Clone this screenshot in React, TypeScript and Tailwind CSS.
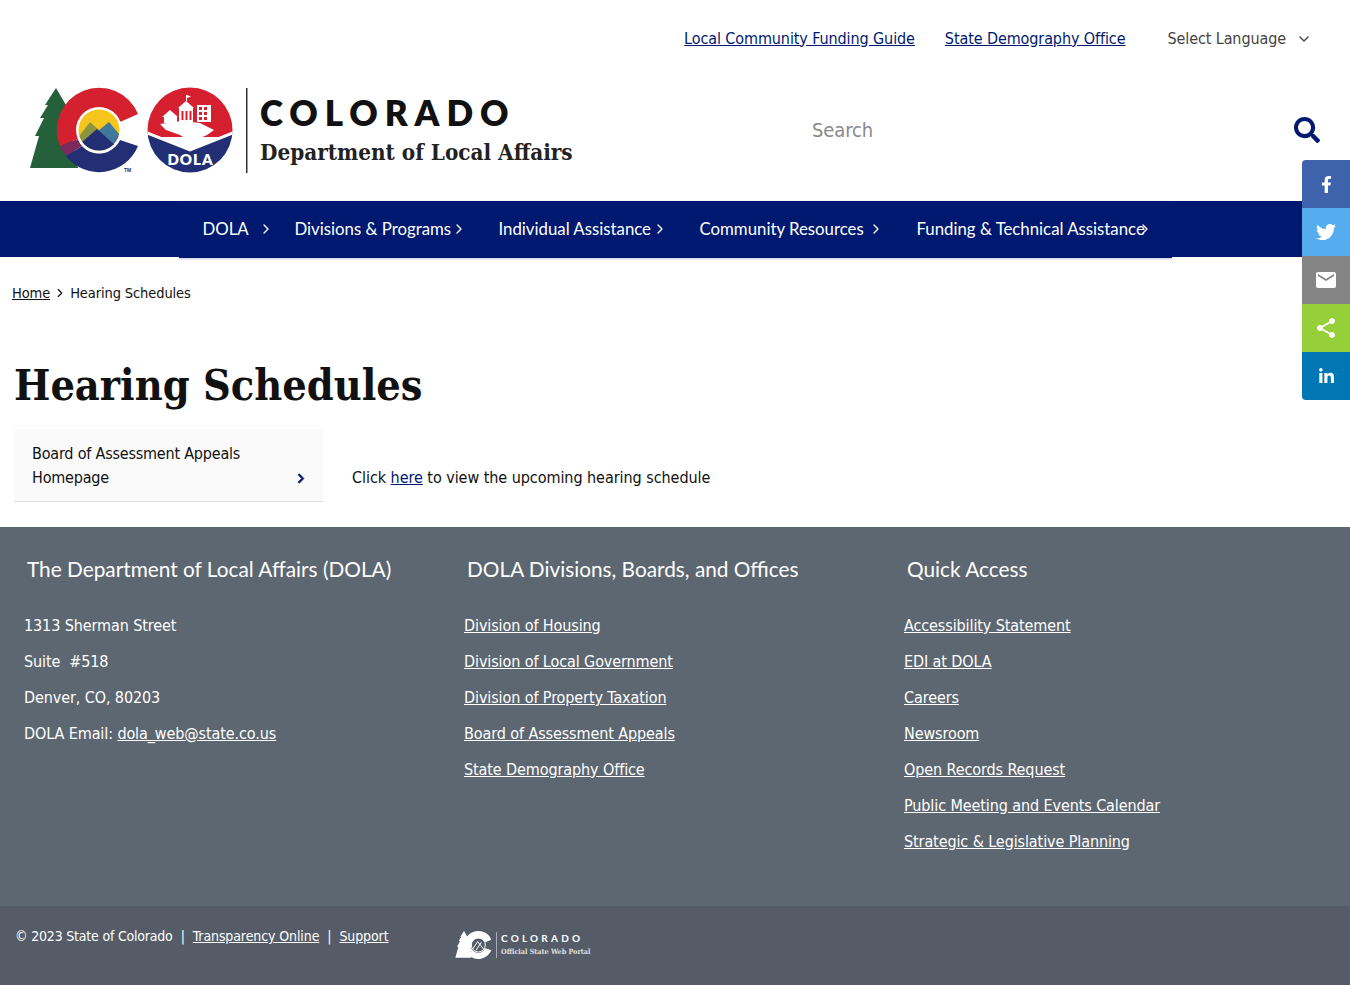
import React from 'react';
import { ChevronRight, ChevronDown } from 'lucide-react';
import { FaFacebookF, FaTwitter, FaLinkedinIn, FaChevronRight, FaSearch } from 'react-icons/fa';
import { MdEmail, MdShare } from 'react-icons/md';

const body = "font-['DejaVu_Sans_Condensed','DejaVu_Sans',sans-serif]";
const museo = "font-['Lato',sans-serif]";
const slab = "font-['DejaVu_Serif_Condensed','DejaVu_Serif',serif]";

const navItems = [
  { label: 'DOLA', cls: 'w-[92px]', gap: 'ml-[9px]' },
  { label: 'Divisions & Programs', cls: 'w-[204px]', gap: 'ml-[0px]' },
  { label: 'Individual Assistance', cls: 'w-[201px]', gap: 'ml-[1px]' },
  { label: 'Community Resources', cls: 'w-[217px]', gap: 'ml-[4px]' },
  { label: 'Funding & Technical Assistance', cls: 'w-[240px]', gap: '-ml-[8px]' },
];

const divisions = [
  'Division of Housing',
  'Division of Local Government',
  'Division of Property Taxation',
  'Board of Assessment Appeals',
  'State Demography Office',
];

const quickAccess = [
  'Accessibility Statement',
  'EDI at DOLA',
  'Careers',
  'Newsroom',
  'Open Records Request',
  'Public Meeting and Events Calendar',
  'Strategic & Legislative Planning',
];

const shareButtons = [
  { icon: <FaFacebookF className="h-[17px] w-[17px]" />, cls: 'bg-[#3f62ad] rounded-tl-[4px]' },
  { icon: <FaTwitter className="h-5 w-5" />, cls: 'bg-[#55acee]' },
  { icon: <MdEmail className="h-6 w-6" />, cls: 'bg-[#848484]' },
  { icon: <MdShare className="h-6 w-6" />, cls: 'bg-[#95d03a]' },
  { icon: <FaLinkedinIn className="h-[17px] w-[17px]" />, cls: 'bg-[#0077b5] rounded-bl-[4px]' },
];

const ColoradoMark = ({ white = false }: { white?: boolean }) => {
  const green = white ? '#ffffff' : '#24603a';
  const red = white ? '#ffffff' : '#d5202f';
  const blue = white ? '#ffffff' : '#222f75';
  const purple = white ? '#ffffff' : '#7c2a5d';
  return (
    <>
      <polygon
        fill={green}
        points="56,88 45,105 48,105 40,118 44,118 35,136 39,136 30,168 78,168 72,140 66,105"
      />
      <path fill={red} d="M138,114 A42,42 0 0 0 60,146 L78,139 A23,23 0 0 1 120,122 Z" />
      <path fill={purple} d="M60,146 A42,42 0 0 0 66,156 L82,146 A23,23 0 0 1 78,139 Z" />
      <path fill={blue} d="M66,156 A42,42 0 0 0 138,146 L120,140 A23,23 0 0 1 82,146 Z" />
      {!white && (
        <>
          <clipPath id="sky">
            <circle cx="99" cy="130" r="20.5" />
          </clipPath>
          <circle cx="99" cy="130" r="23" fill="#ffffff" />
          <g clipPath="url(#sky)">
            <rect x="78" y="109" width="42" height="42" fill="#f6c51b" />
            <polygon fill="#8d9440" points="76,140 90,122 100,131 90,152" />
            <polygon fill="#41779b" points="98,131 109,122 124,140 110,152" />
            <polygon fill="#222f75" points="76,152 82,142 97,129 116,146 122,155 76,155" />
          </g>
        </>
      )}
      {white && (
        <>
          <circle cx="99" cy="130" r="21" fill="#555c67" stroke="#ffffff" strokeWidth="3" />
          <path d="M82,142 L97,120 L116,144 M92,146 L108,122" fill="none" stroke="#ffffff" strokeWidth="3" />
        </>
      )}
    </>
  );
};

const Logo = () => (
  <svg width="220" height="90" viewBox="30 85 220 90" className="shrink-0">
    <defs>
      <clipPath id="seal">
        <circle cx="190" cy="130" r="42.5" />
      </clipPath>
    </defs>
    <ColoradoMark />
    <text x="124" y="172" fontSize="5" fontWeight="700" fill="#222f75" fontFamily="Liberation Sans, sans-serif">TM</text>
    <g clipPath="url(#seal)">
      <rect x="147" y="87" width="86" height="50" fill="#d5202f" />
      <polygon points="147,133 190,150 233,133 233,174 147,174" fill="#222f75" />
      <polyline points="147,133 190,150 233,133" fill="none" stroke="#ffffff" strokeWidth="3" />
      {/* capitol, house and the hand under them */}
      <g fill="#ffffff">
        <rect x="179" y="108" width="14" height="14" />
        <polygon points="178,108 186,101 194,108" />
        <rect x="186" y="95" width="1" height="6" />
        <polygon points="187,95 191,96.5 187,98" />
        <rect x="197" y="105" width="14" height="17" />
        <rect x="164" y="116" width="13" height="7" />
        <polygon points="162,117 170,110 178,117" />
        <polygon points="160,124 182,121 200,123 214,130 207,135 191,142 180,135 166,130" />
      </g>
      <g fill="#d5202f">
        <rect x="181.5" y="111" width="2" height="9" />
        <rect x="185.5" y="111" width="2" height="9" />
        <rect x="189.5" y="111" width="2" height="9" />
        <rect x="199" y="107" width="3" height="3" />
        <rect x="204" y="107" width="3" height="3" />
        <rect x="199" y="112" width="3" height="3" />
        <rect x="204" y="112" width="3" height="3" />
        <rect x="199" y="117" width="3" height="3" />
        <rect x="204" y="117" width="3" height="3" />
      </g>
      <text x="190.5" y="165" textAnchor="middle" fontSize="15" fontWeight="800" letterSpacing="1" fill="#ffffff" fontFamily="Lato, sans-serif">DOLA</text>
    </g>
    <rect x="246" y="88" width="1.5" height="85" fill="#333333" />
  </svg>
);

const FooterLogo = () => (
  <div className="flex items-center">
    <svg width="38" height="30" viewBox="30 85 112 90" className="shrink-0">
      <ColoradoMark white />
    </svg>
    <div className="ml-[3px] border-l border-white/50 pl-[4px]">
      <div className={`${museo} text-[10px] leading-[13px] font-bold tracking-[3.2px] text-white`}>COLORADO</div>
      <div className={`${slab} text-[7.2px] leading-[13px] font-bold tracking-normal whitespace-nowrap text-white/80`}>Official State Web Portal</div>
    </div>
  </div>
);

export default function App() {
  return (
    <div className={`${body} min-h-[985px] bg-white text-[16px] leading-[24px] tracking-[-0.1px] text-[#111]`}>
      <div className="flex h-[77px] items-center justify-end pr-[38px]">
        <a href="#" className="text-[#001970] underline">Local Community Funding Guide</a>
        <a href="#" className="ml-[30px] text-[#001970] underline">State Demography Office</a>
        <span className="ml-[42px] text-[#444]">Select Language</span>
        <ChevronDown className="ml-[10px] h-4 w-4 text-[#444]" />
      </div>

      <header className="flex h-[124px] items-start pt-[8px] pl-[30px]">
        <Logo />
        <div className="ml-[10px] w-[540px] pt-[7px]">
          <div className={`${museo} text-[35px] leading-[40px] font-extrabold tracking-[6.9px] text-[#111]`}>COLORADO</div>
          <div className={`${slab} mt-[5px] text-[22.3px] leading-[30px] font-bold tracking-normal whitespace-nowrap text-[#222]`}>Department of Local Affairs</div>
        </div>
        <div className="ml-[12px] flex w-[508px] items-center justify-between pt-[32px]">
          <span className="text-[20px] text-[#8a8a8a]">Search</span>
          <FaSearch className="h-[26px] w-[26px] text-[#001970]" />
        </div>
      </header>

      <nav className="h-[56px] bg-[#001970]">
        <div className={`${museo} mx-auto flex h-[57px] w-[993px] items-center bg-[#001970] pb-[1px] pl-[24px] text-[16.8px] tracking-normal text-white shadow-[0_1px_2px_rgba(0,25,112,0.25)]`}>
          {navItems.map((item) => (
            <div key={item.label} className={`${item.cls} flex shrink-0 items-center`}>
              <span className="whitespace-nowrap">{item.label}</span>
              <ChevronRight className={`${item.gap} h-4 w-4 shrink-0`} />
            </div>
          ))}
        </div>
      </nav>

      <div className="flex items-center pt-[24px] pl-[12px] text-[14.5px] leading-[24px]">
        <a href="#" className="underline">Home</a>
        <ChevronRight className="mx-[3px] h-[14px] w-[14px]" />
        <span>Hearing Schedules</span>
      </div>

      <h1 className={`${slab} mt-[52px] pl-[14px] text-[42.8px] leading-[56px] font-bold tracking-normal text-[#111]`}>Hearing Schedules</h1>

      <div className="mt-[16px] flex items-end pl-[14px]">
        <a href="#" className="flex h-[73px] w-[309px] items-end justify-between border-b border-[#ddd] bg-[#fafafa] pr-[18px] pb-[11px] pl-[18px]">
          <span className="w-[230px] tracking-[-0.2px]">Board of Assessment Appeals Homepage</span>
          <FaChevronRight className="mb-[6px] h-[11px] w-[8px] stroke-[30px] text-[#001970]" />
        </a>
        <p className="ml-[29px] pb-[12px] tracking-[-0.05px]">
          Click <a href="#" className="text-[#001970] underline">here</a> to view the upcoming hearing schedule
        </p>
      </div>

      <footer className="mt-[25px] text-white">
        <div className="flex h-[379px] bg-[#5d6771] pt-[27px] pl-[24px]">
          <div className="w-[440px]">
            <h2 className={`${museo} pl-[3px] text-[20.8px] leading-[30px] tracking-normal`}>The Department of Local Affairs (DOLA)</h2>
            <div className="mt-[30px] flex flex-col gap-[12px]">
              <p>1313 Sherman Street</p>
              <p>Suite&nbsp; #518</p>
              <p>Denver, CO, 80203</p>
              <p>DOLA Email: <a href="#" className="underline">dola_web@state.co.us</a></p>
            </div>
          </div>
          <div className="w-[440px]">
            <h2 className={`${museo} pl-[3px] text-[20.8px] leading-[30px] tracking-normal`}>DOLA Divisions, Boards, and Offices</h2>
            <ul className="mt-[30px] flex flex-col gap-[12px]">
              {divisions.map((d) => (
                <li key={d}><a href="#" className="underline">{d}</a></li>
              ))}
            </ul>
          </div>
          <div>
            <h2 className={`${museo} pl-[3px] text-[20.8px] leading-[30px] tracking-normal`}>Quick Access</h2>
            <ul className="mt-[30px] flex flex-col gap-[12px]">
              {quickAccess.map((d) => (
                <li key={d}><a href="#" className="underline">{d}</a></li>
              ))}
            </ul>
          </div>
        </div>
        <div className="flex h-[79px] items-start bg-[#555c67] pl-[15px] text-[14px]">
          <div className="flex w-[440px] pt-[18px]">
            <span className="tracking-[-0.2px]">© 2023 State of Colorado</span>
            <span className="mx-[8px]">|</span>
            <a href="#" className="underline">Transparency Online</a>
            <span className="mx-[8px]">|</span>
            <a href="#" className="underline">Support</a>
          </div>
          <div className="pt-[24px]">
            <FooterLogo />
          </div>
        </div>
      </footer>

      <div className="fixed top-[160px] right-0 flex w-[48px] flex-col text-white">
        {shareButtons.map((b, i) => (
          <a key={i} href="#" className={`${b.cls} flex h-[48px] items-center justify-center`}>{b.icon}</a>
        ))}
      </div>
    </div>
  );
}
